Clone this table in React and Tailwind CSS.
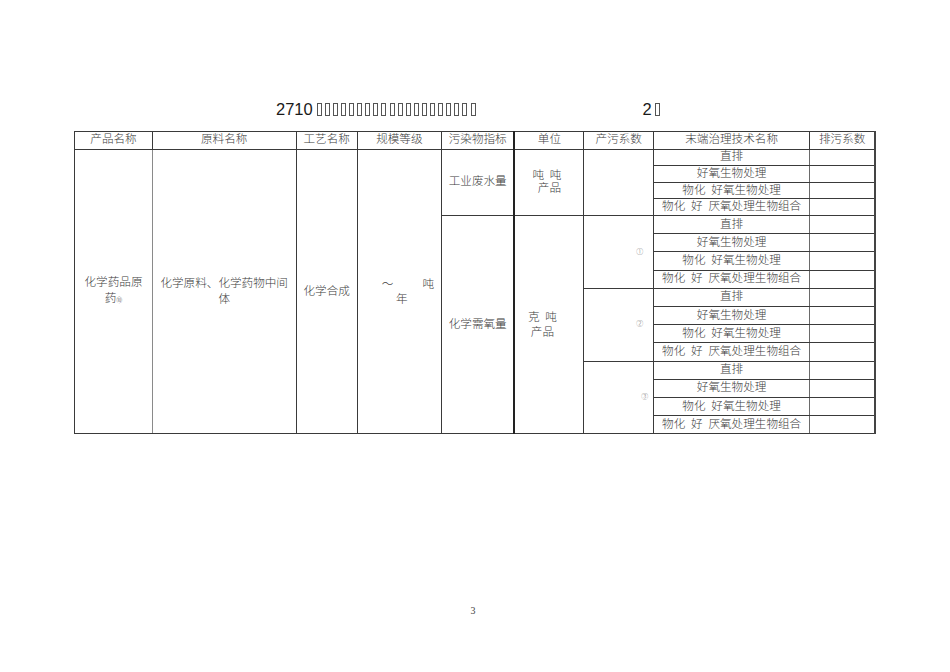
const serif = { fontFamily: '"Liberation Serif", "Noto Sans CJK SC", serif' };

function Tofu() {
  return <span className="inline-block h-[13px] w-[5px] border border-[#555]" />;
}

const treatments = ['直排', '好氧生物处理', '物化\u2002好氧生物处理', '物化\u2002好\u2002厌氧处理生物组合'];

const cell = 'border border-[#3a3a3a] p-0 text-center align-middle';

function TreatmentCells({ index }) {
  return (
    <>
      <td className={`${cell} border-r-[#6a6a6a] leading-[14px]`}>{treatments[index]}</td>
      <td className={`${cell} border-r-2 border-r-[#444]`} />
    </>
  );
}

export default function App() {
  const headers = ['产品名称', '原料名称', '工艺名称', '规模等级', '污染物指标', '单位', '产污系数', '末端治理技术名称', '排污系数'];
  const widths = [77.4, 144, 61, 84.3, 73, 69.3, 70, 155.7, 66];
  const groups = [
    { mark: '①', pad: 'pr-[10px]' },
    { mark: '②', pad: 'pr-[10px]' },
    { mark: '③', pad: 'pr-[5px]' },
  ];

  return (
    <div className="h-[672px] w-[950px] bg-white font-light text-[#3c3c3c]" style={serif}>
      <div className="flex items-center pl-[276px] pt-[101px] leading-[17px]">
        <span className="text-[16.5px] font-normal text-[#1a1a1a]" style={{ fontFamily: '"Liberation Sans", sans-serif' }}>
          2710
        </span>
        <span className="ml-[4px] flex gap-[3.1px]">
          {Array.from({ length: 20 }).map((_, i) => (
            <Tofu key={i} />
          ))}
        </span>
        <span className="ml-[167px] text-[16.5px] font-normal text-[#1a1a1a]" style={{ fontFamily: '"Liberation Sans", sans-serif' }}>
          2
        </span>
        <span className="ml-[3px] flex">
          <Tofu />
        </span>
      </div>

      <table className="ml-[74.3px] mt-[13px] table-fixed text-[11.6px]" style={{ width: 800.7 }}>
        <colgroup>
          {widths.map((w, i) => (
            <col key={i} style={{ width: w }} />
          ))}
        </colgroup>
        <tbody>
          <tr className="h-[17.7px]">
            {headers.map((h, i) => (
              <td
                key={h}
                className={`${cell} leading-[14px] ${i === 5 ? 'border-l-2 border-l-[#222]' : ''} ${i === 8 ? 'border-r-2 border-r-[#444]' : ''} ${i === 1 ? 'border-l-[#8a8a8a]' : ''}`}
              >
                {h}
              </td>
            ))}
          </tr>

          {/* 工业废水量 block */}
          {[0, 1, 2, 3].map((r) => (
            <tr key={`w${r}`} className="h-[16.6px]">
              {r === 0 && (
                <>
                  <td rowSpan={16} className={`${cell} border-r-[#8a8a8a] leading-[16px]`}>
                    化学药品原
                    <br />
                    药<span className="text-[6px]">⑩</span>
                  </td>
                  <td rowSpan={16} className={`${cell} leading-[16px]`}>
                    化学原料、化学药物中间
                    <br />
                    体
                  </td>
                  <td rowSpan={16} className={`${cell} leading-[16px]`}>
                    化学合成
                  </td>
                  <td rowSpan={16} className={`${cell} leading-[15px]`}>
                    <div className="flex justify-between pl-[24px] pr-[7px]">
                      <span>～</span>
                      <span>吨</span>
                    </div>
                    <div className="pl-[5px]">年</div>
                  </td>
                  <td rowSpan={4} className={`${cell} leading-[14px]`}>
                    工业废水量
                  </td>
                  <td rowSpan={4} className={`${cell} border-l-2 border-l-[#222] leading-[13.5px]`}>
                    <div className="pr-[5px]">吨{'\u2002'}吨</div>
                    <div>产品</div>
                  </td>
                  <td rowSpan={4} className={cell} />
                </>
              )}
              <TreatmentCells index={r} />
            </tr>
          ))}

          {/* 化学需氧量 block */}
          {groups.map((g, gi) =>
            [0, 1, 2, 3].map((r) => (
              <tr key={`c${gi}${r}`} className="h-[18.2px]">
                {gi === 0 && r === 0 && (
                  <>
                    <td rowSpan={12} className={`${cell} leading-[14px]`}>
                      化学需氧量
                    </td>
                    <td rowSpan={12} className={`${cell} border-l-2 border-l-[#222] leading-[15px]`}>
                      <div className="pr-[14px]">克{'\u2002'}吨</div>
                      <div className="pr-[14px]">产品</div>
                    </td>
                  </>
                )}
                {r === 0 && (
                  <td rowSpan={4} className={`${cell} text-right ${g.pad} text-[7px] text-[#777]`}>
                    {g.mark}
                  </td>
                )}
                <TreatmentCells index={r} />
              </tr>
            ))
          )}
        </tbody>
      </table>

      <div className="mt-[171px] pr-[4px] text-center text-[10px] leading-[12px] text-[#444]">3</div>
    </div>
  );
}
